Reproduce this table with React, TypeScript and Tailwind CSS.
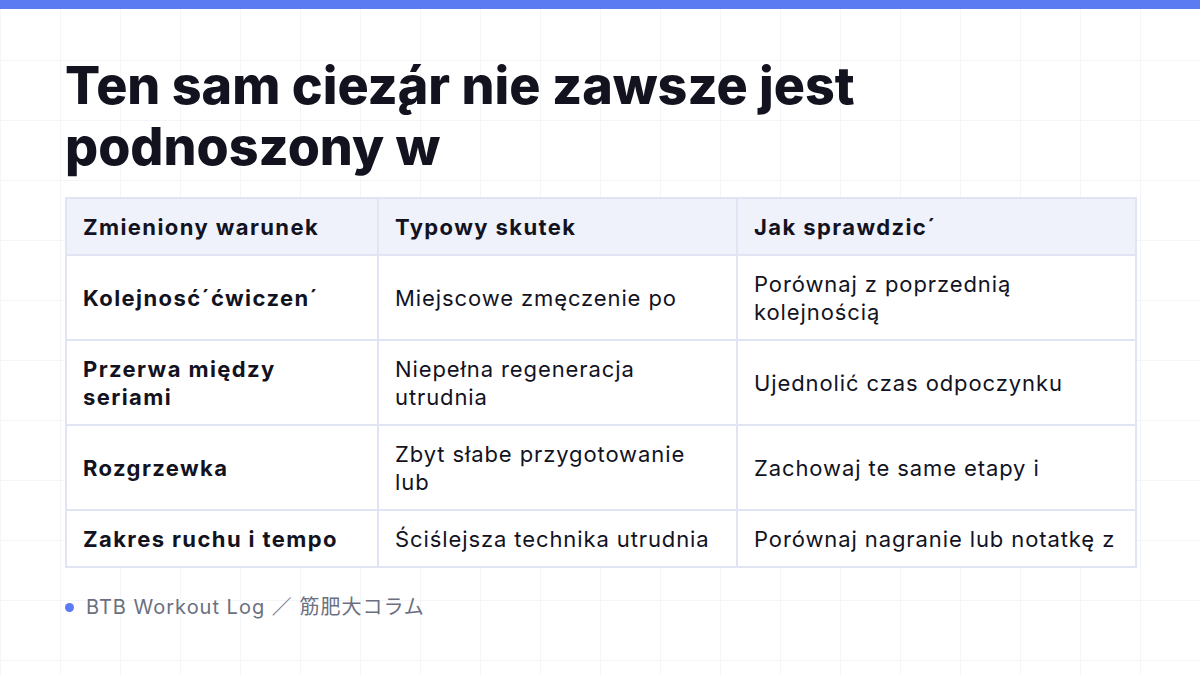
import React from "react";

const rows: [string, string, string][] = [
  ["Kolejnosć´ćwiczen´", "Miejscowe zmęczenie po", "Porównaj z poprzednią kolejnością"],
  ["Przerwa między seriami", "Niepełna regeneracja utrudnia", "Ujednolić czas odpoczynku"],
  ["Rozgrzewka", "Zbyt słabe przygotowanie lub", "Zachowaj te same etapy i"],
  ["Zakres ruchu i tempo", "Ściślejsza technika utrudnia", "Porównaj nagranie lub notatkę z"],
];

export default function App() {
  return (
    <div
      className="relative w-[1200px] h-[675px] overflow-hidden bg-white text-[#12131f]"
      style={{ fontFamily: 'Inter, "Noto Sans CJK JP", sans-serif' }}
    >
      <div
        className="absolute inset-0 bg-[linear-gradient(to_right,#f4f5f8_1px,transparent_1px),linear-gradient(to_bottom,#f4f5f8_1px,transparent_1px)] bg-[size:60px_60px]"
      />
      <div className="relative flex flex-col h-full">
        <div className="h-[9px] bg-[#5b7bf3] shrink-0" />
        <div className="px-[65px] pt-[46px]">
          <h1 className="text-[52px] leading-[61px] font-extrabold tracking-[0px] w-[900px]">
            Ten sam ciez̨ár nie zawsze jest
            <br />
            podnoszony w
          </h1>
          <table className="mt-[20px] w-[1070px] border-collapse border-2 border-[#e1e4f3] text-[22px] leading-[28px] tracking-[0.9px] table-fixed">
            <colgroup>
              <col className="w-[312px]" />
              <col className="w-[359px]" />
              <col className="w-[399px]" />
            </colgroup>
            <thead>
              <tr className="bg-[#eff1fb]">
                <th className="border-2 border-[#e1e4f3] px-[16px] py-[13.5px] text-left font-bold tracking-[1.4px]">Zmieniony warunek</th>
                <th className="border-2 border-[#e1e4f3] px-[16px] py-[13.5px] text-left font-bold tracking-[1.4px]">Typowy skutek</th>
                <th className="border-2 border-[#e1e4f3] px-[16px] py-[13.5px] text-left font-bold tracking-[1.4px]">Jak sprawdzic´</th>
              </tr>
            </thead>
            <tbody>
              {rows.map((r, i) => (
                <tr key={i} className="bg-white">
                  <td className="border-2 border-[#e1e4f3] px-[16px] py-[13.5px] font-bold tracking-[1.4px] align-middle">{r[0]}</td>
                  <td className="border-2 border-[#e1e4f3] px-[16px] py-[13.5px] align-middle">{r[1]}</td>
                  <td className="border-2 border-[#e1e4f3] px-[16px] py-[13.5px] align-middle">{r[2]}</td>
                </tr>
              ))}
            </tbody>
          </table>
          <div className="mt-[25px] flex items-center gap-[12px] text-[20px] leading-[28px] tracking-[1px] text-[#6b7080]">
            <span className="w-[9px] h-[9px] rounded-full bg-[#5b7bf3]" />
            <span>BTB Workout Log ／ 筋肥大コラム</span>
          </div>
        </div>
      </div>
    </div>
  );
}
